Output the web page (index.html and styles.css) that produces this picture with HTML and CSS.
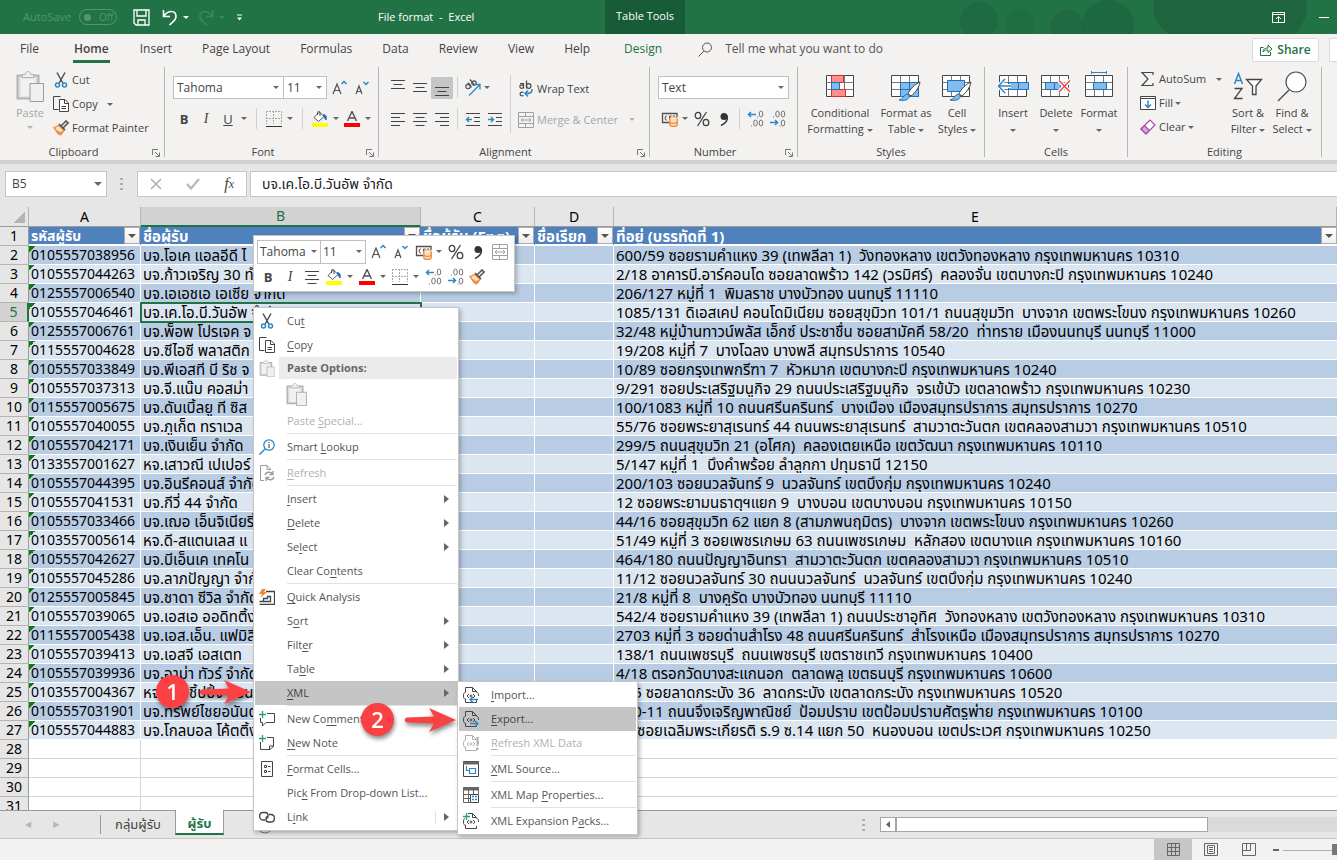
FILE: index.html
```html
<!DOCTYPE html>
<html lang="en">
<head>
<meta charset="utf-8">
<title>File format - Excel</title>
<link rel="stylesheet" href="styles.css">
</head>
<body>
<svg class="defs" aria-hidden="true">
  <symbol id="cut" viewBox="0 0 16 16"><path d="M4 0.5 9.8 11M12 0.5 6.2 11" fill="none" stroke="#505050" stroke-width="1.5"/><circle cx="4.5" cy="13" r="2" fill="none" stroke="#2b88c8" stroke-width="1.5"/><circle cx="11.5" cy="13" r="2" fill="none" stroke="#2b88c8" stroke-width="1.5"/></symbol>
  <symbol id="copy" viewBox="0 0 16 16"><path d="M5.500 13.500H0.500V0.500H7.500" fill="none" stroke="#444"/><path d="M6.500 3.500H12L15.500 7V15.500H6.500Z" fill="#fff" stroke="#444"/><path d="M11.500 3.500V7.500H15.500M8.500 10.500H13M8.500 12.500H13" fill="none" stroke="#444"/></symbol>
  <symbol id="painter" viewBox="0 0 16 16"><path d="M1 7.500 6 5.500 11 10.500 7.500 15 5 13.500 3.500 11Z" fill="#fbe0c8" stroke="#ed8733" stroke-width="1.3"/><path d="M3.500 10.500 6 13 9.500 12" fill="none" stroke="#ed8733" stroke-width="1.5"/><path d="M6 4 12 10M8.500 5.500 13 1 15 3 10.500 7.500" fill="none" stroke="#555" stroke-width="1.6"/></symbol>
  <symbol id="paste" viewBox="0 0 28 31"><path d="M1.500 4.500H22.500V27.500H1.500Z" fill="#dcdcdc" stroke="#b3b3b3" stroke-width="2"/><path d="M4.500 7.500H19.500V25.500H4.500Z" fill="#f1f1f1"/><path d="M6.500 6.500V3.500H9.500C9.500-.5 14.500-.5 14.500 3.500H17.500V6.500Z" fill="#f1f1f1" stroke="#b3b3b3"/><path d="M14 12.500H27.500V30.500H14Z" fill="#f0f0f0" stroke="#9b9b9b"/></symbol>
  <symbol id="bucket" viewBox="0 0 16 16"><path d="M2 6.500 7.500 1 12 5.500 6.500 10.500ZM5.500 4V1.500C5.500 0 8 0 8 1.500V5" fill="#fff" stroke="#505050"/><path d="M11.500 3.500C14.500 4 14.500 6 14 9L12 6Z" fill="#1e6fb5" stroke="#1e6fb5"/><path d="M0 12H16V16H0Z" fill="#ff0"/></symbol>
  <symbol id="fontcolor" viewBox="0 0 16 16"><path d="M3.500 10 8 0.500 12.500 10M5 7H11" fill="none" stroke="#505050" stroke-width="1.400"/><path d="M0 12H16V16H0Z" fill="#f00"/></symbol>
  <symbol id="borders" viewBox="0 0 16 16"><path d="M.5 0V13M15.500 0V13M7.500 0V13M0 .5H16M0 7.500H16" fill="none" stroke="#a8a8a8" stroke-dasharray="2 1"/><path d="M0 15.500H16" stroke="#333"/></symbol>
  <symbol id="growfont" viewBox="0 0 16 16"><path d="M1 14 5 4 9 14M2.500 10.500H7.500" fill="none" stroke="#505050" stroke-width="1.200"/><path d="M9.500 4 12 1.500 14.500 4" fill="none" stroke="#2b88c8" stroke-width="1.500"/></symbol>
  <symbol id="shrinkfont" viewBox="0 0 16 16"><path d="M2 14 5 6 8 14M3 11.500H7" fill="none" stroke="#505050" stroke-width="1.200"/><path d="M9.500 2 12 4.500 14.500 2" fill="none" stroke="#2b88c8" stroke-width="1.500"/></symbol>
  <symbol id="center" viewBox="0 0 16 16"><path d="M1 2.500H15M3.500 6.500H12.500M1 10.500H15M3.500 14.500H12.500" stroke="#444"/></symbol>
  <symbol id="left" viewBox="0 0 16 16"><path d="M1 2.500H15M1 6.500H10M1 10.500H15M1 14.500H10" stroke="#444"/></symbol>
  <symbol id="right" viewBox="0 0 16 16"><path d="M1 2.500H15M6 6.500H15M1 10.500H15M6 14.500H15" stroke="#444"/></symbol>
  <symbol id="top" viewBox="0 0 16 16"><path d="M1 .5H15M3.500 4.500H12.500M1 8.500H15" stroke="#444"/></symbol>
  <symbol id="middle" viewBox="0 0 16 16"><path d="M1 3.500H15M3.500 7.500H12.500M1 11.500H15" stroke="#444"/></symbol>
  <symbol id="bottom" viewBox="0 0 16 16"><path d="M1 7.500H15M3.500 11.500H12.500M1 15.500H15" stroke="#444"/></symbol>
  <symbol id="outdent" viewBox="0 0 16 16"><path d="M1 2.500H15M9 6.500H15M9 10.500H15M1 14.500H15" stroke="#444"/><path d="M7 8.500H1.500M4 6 1.500 8.500 4 11" fill="none" stroke="#2b88c8" stroke-width="1.400"/></symbol>
  <symbol id="indent" viewBox="0 0 16 16"><path d="M1 2.500H15M9 6.500H15M9 10.500H15M1 14.500H15" stroke="#444"/><path d="M1 8.500H6.500M4 6 6.500 8.500 4 11" fill="none" stroke="#2b88c8" stroke-width="1.400"/></symbol>
  <symbol id="orient" viewBox="0 0 18 18"><g fill="none" stroke="#505050" stroke-width="1.200"><circle cx="4" cy="7.500" r="2.200"/><path d="M3.500 4.500C5 3.500 5.500 5 7.500 8.500M6 .5 10.500 6"/><circle cx="10" cy="4" r="2.200"/></g><path d="M5 16.500 15.500 6M11 5.500H16V10.500" fill="none" stroke="#2b88c8" stroke-width="1.300"/></symbol>
  <symbol id="wrap" viewBox="0 0 16 18"><g fill="none" stroke="#444" stroke-width="1.200"><path d="M2 3.500H5.500V8.500M8.500 .5V8.500M5.500 12.500C1 10.500 1 17.500 5.500 15.500"/><ellipse cx="3.700" cy="6.600" rx="1.900" ry="1.800"/><ellipse cx="10.700" cy="6" rx="2.200" ry="2.400"/></g><path d="M14 9C14.500 13 12 13.500 7 13.500M10 10.500 7 13.500 10 16.500" fill="none" stroke="#2b88c8" stroke-width="1.500"/></symbol>
  <symbol id="merge" viewBox="0 0 16 16"><path d="M.5 .5H15.500V15.500H.5ZM.5 4.500H15.500M.5 11.500H15.500M7.500 .5V4.500M7.500 11.500V15.500M3 8H13M5 6 3 8 5 10M11 6 13 8 11 10" fill="none" stroke="#a0a0a0"/></symbol>
  <symbol id="money" viewBox="0 0 17 16"><path d="M8 11.500H1.500V2.500H16V6" fill="none" stroke="#505050" stroke-width="1.300"/><path d="M6 5C3.500 4 3.500 10 6 9M8.500 9V5H10.500M12 5H14" fill="none" stroke="#505050"/><ellipse cx="12.500" cy="7.500" rx="3.700" ry="1.700" fill="#fff" stroke="#ed8733"/><path d="M8.800 7.500V14C8.800 15.900 16.200 15.900 16.200 14V7.500M8.800 11C9.500 12.700 15.500 12.700 16.200 11" fill="#fbe0c8" stroke="#ed8733" stroke-width="1.300"/></symbol>
  <symbol id="percent" viewBox="0 0 16 16"><g fill="none" stroke="#444" stroke-width="1.300"><ellipse cx="4" cy="4.500" rx="2.800" ry="3.200"/><ellipse cx="12" cy="11.500" rx="2.800" ry="3.200"/><path d="M12.500 1 3.500 15"/></g></symbol>
  <symbol id="comma" viewBox="0 0 16 16"><circle cx="8" cy="5.500" r="3.500" fill="#333"/><path d="M11 4.500C12.500 9 9 13 5 14.500" fill="none" stroke="#333" stroke-width="1.600"/></symbol>
  <symbol id="incdec" viewBox="0 0 17 17"><path d="M9 4.500H1.500M4 2 1.500 4.500 4 7" fill="none" stroke="#2b88c8" stroke-width="1.500"/><g fill="none" stroke="#777"><ellipse cx="14" cy="4" rx="1.800" ry="3"/><ellipse cx="8.500" cy="13" rx="1.800" ry="3"/><ellipse cx="14" cy="13" rx="1.800" ry="3"/><path d="M10 7H11M4 16H5"/></g></symbol>
  <symbol id="decdec" viewBox="0 0 17 17"><path d="M1 12.500H8.500M6 10 8.500 12.500 6 15" fill="none" stroke="#2b88c8" stroke-width="1.500"/><g fill="none" stroke="#777"><ellipse cx="14" cy="4" rx="1.800" ry="3"/><ellipse cx="8.500" cy="4" rx="1.800" ry="3"/><ellipse cx="14" cy="13" rx="1.800" ry="3"/><path d="M4 7H5M10.500 16H11.500"/></g></symbol>
  <symbol id="launch" viewBox="0 0 8 8"><path d="M.5 6V.5H6M3 3 7 7M7.500 3.500V7.500H3.500" fill="none" stroke="#777"/></symbol>
  <symbol id="grid" viewBox="0 0 28 24"><path d="M.5 1.500H27.500V22.500H.5Z" fill="#fff" stroke="#444"/><path d="M.5 8.500H27.500M.5 15.500H27.500M9.500 1.500V22.500M18.500 1.500V22.500" stroke="#777"/></symbol>
  <symbol id="xmlfile" viewBox="0 0 16 16"><path d="M2.500 5V.5H9.500L13 4V5M9.500 .5V4.500H13.500M2.500 12V15.500H13.500V13" fill="none" stroke="currentColor"/><path d="M2.500 5.500C.5 5.500 .5 7 .5 9 .5 11.500 1 12 2.500 12M13.500 5.500C15.500 5.500 15.500 7 15.500 9M6 7 4 9 6 11M10 7 12 9 10 11" fill="none" stroke="currentColor"/><circle cx="8" cy="9" r="1" fill="none" stroke="currentColor"/></symbol>
</svg>

<header class="titlebar">
  <div class="quick">
    <label class="autosave">AutoSave <span class="toggle"><input type="checkbox" disabled><i></i>Off</span></label>
    <button class="tb save" aria-label="Save"><svg width="17" height="17"><path d="M1 1H16V16H3L1 14ZM4 1V7H13V1M5 16V11H12V16" fill="none" stroke="#fff" stroke-width="1.300"/></svg></button>
    <button class="tb undo" aria-label="Undo"><svg width="16" height="17"><path d="M1.500 1V7.500H8M2 7C6 1 14 1 14 7.500 14 11 11 13 7.500 16" fill="none" stroke="#fff" stroke-width="1.600"/></svg><i class="caret"></i></button>
    <button class="tb redo" aria-label="Redo"><svg width="16" height="17"><path d="M14.500 1V7.500H8M14 7C10 1 2 1 2 7.500 2 11 5 13 8.500 16" fill="none" stroke="currentColor" stroke-width="1.600"/></svg><i class="caret"></i></button>
    <button class="tb more" aria-label="Customize"><svg width="5" height="7"><path d="M0 1H5" stroke="#fff"/><path d="M0 3.500H5L2.500 6.500Z" fill="#fff"/></svg></button>
  </div>
  <h1>File format&nbsp; -&nbsp; Excel</h1>
  <div class="tools">Table Tools</div>
  <svg class="pattern" width="407" height="34" aria-hidden="true"><g fill="#1e643d"><circle cx="49" cy="21" r="19" opacity=".6"/><circle cx="90" cy="24" r="15" opacity=".35"/><circle cx="137" cy="27" r="17" opacity=".6"/><circle cx="178" cy="26" r="26" opacity=".7"/><path d="M224 0H375C380 12 374 22 366 34H238C226 24 221 12 224 0Z" opacity=".9"/></g></svg>
  <div class="winctl">
    <button aria-label="Ribbon options"><svg width="13" height="11"><path d="M.5 .5H12.500V10.500H.5ZM.5 2.500H12.500M6.500 10V5M4 7 6.500 4.500 9 7" fill="none" stroke="#fff"/></svg></button>
    <button aria-label="Minimize"><svg width="10" height="11"><path d="M0 5.500H10" stroke="#fff"/></svg></button>
  </div>
</header>

<nav class="tabs">
  <button>File</button><button class="on">Home</button><button>Insert</button><button>Page Layout</button><button>Formulas</button><button>Data</button><button>Review</button><button>View</button><button>Help</button><button class="design">Design</button>
  <button class="tell"><svg width="15" height="15"><circle cx="9" cy="5.500" r="4.500" fill="none" stroke="#555"/><path d="M6 9 .5 14.500" stroke="#555"/></svg>Tell me what you want to do</button>
  <button class="share"><svg width="13" height="12"><path d="M3.500 3.500H.5V11.500H10.500V8M3 8C3 5 5 4 8 4V1L12 5 8 8.500V6C6 6 4.500 6 3 8Z" fill="none" stroke="#217346"/></svg>Share</button>
  <button class="comment" aria-label="Comments"></button>
</nav>

<section class="ribbon">
  <div class="group clipboard">
    <div class="body">
      <button class="big dim"><svg width="28" height="31"><use href="#paste"/></svg><span>Paste</span><i class="caret"></i></button>
      <div class="stack">
        <button><svg width="16" height="16"><use href="#cut"/></svg>Cut</button>
        <button><svg width="16" height="16"><use href="#copy"/></svg>Copy <i class="caret"></i></button>
        <button><svg width="16" height="16"><use href="#painter"/></svg>Format Painter</button>
      </div>
    </div>
    <footer class="launcher">Clipboard<svg width="8" height="8"><use href="#launch"/></svg></footer>
  </div>
  <div class="group font">
    <div class="body lines">
      <div class="line">
        <label class="combo fname"><select aria-label="Font"><option>Tahoma</option></select><i class="caret"></i></label><label class="combo fsize"><select aria-label="Font size"><option>11</option></select><i class="caret"></i></label>
        <button class="ic" aria-label="Increase font size"><svg width="16" height="16"><use href="#growfont"/></svg></button>
        <button class="ic" aria-label="Decrease font size"><svg width="16" height="16"><use href="#shrinkfont"/></svg></button>
      </div>
      <div class="line">
        <button class="ic b">B</button><button class="ic it">I</button><button class="ic u">U</button><i class="caret"></i><i class="bar"></i>
        <button class="ic" aria-label="Borders"><svg width="16" height="16"><use href="#borders"/></svg></button><i class="caret"></i><i class="bar"></i>
        <button class="ic" aria-label="Fill colour"><svg width="16" height="16"><use href="#bucket"/></svg></button><i class="caret"></i>
        <button class="ic" aria-label="Font colour"><svg width="16" height="16"><use href="#fontcolor"/></svg></button><i class="caret"></i>
      </div>
    </div>
    <footer class="launcher">Font<svg width="8" height="8"><use href="#launch"/></svg></footer>
  </div>
  <div class="group align">
    <div class="body">
      <div class="lines">
        <div class="line">
          <button class="ic" aria-label="Top align"><svg width="16" height="16"><use href="#top"/></svg></button><button class="ic" aria-label="Middle align"><svg width="16" height="16"><use href="#middle"/></svg></button><button class="ic pressed" aria-label="Bottom align"><svg width="16" height="16"><use href="#bottom"/></svg></button><i class="bar"></i><button class="ic" aria-label="Orientation"><svg width="18" height="18"><use href="#orient"/></svg></button><i class="caret"></i>
        </div>
        <div class="line">
          <button class="ic" aria-label="Align left"><svg width="16" height="16"><use href="#left"/></svg></button><button class="ic" aria-label="Center"><svg width="16" height="16"><use href="#center"/></svg></button><button class="ic" aria-label="Align right"><svg width="16" height="16"><use href="#right"/></svg></button><i class="bar"></i><button class="ic" aria-label="Decrease indent"><svg width="16" height="16"><use href="#outdent"/></svg></button><button class="ic" aria-label="Increase indent"><svg width="16" height="16"><use href="#indent"/></svg></button>
        </div>
      </div>
      <div class="lines wrapcol">
        <div class="line"><button><svg width="16" height="18"><use href="#wrap"/></svg>Wrap Text</button></div>
        <div class="line"><button class="dim"><svg width="16" height="16"><use href="#merge"/></svg>Merge &amp; Center <i class="caret"></i></button></div>
      </div>
    </div>
    <footer class="launcher">Alignment<svg width="8" height="8"><use href="#launch"/></svg></footer>
  </div>
  <div class="group number">
    <div class="body lines">
      <div class="line"><label class="combo"><select aria-label="Number format"><option>Text</option></select><i class="caret"></i></label></div>
      <div class="line">
        <button class="ic" aria-label="Accounting format"><svg width="17" height="16"><use href="#money"/></svg></button><i class="caret"></i><button class="ic" aria-label="Percent"><svg width="16" height="16"><use href="#percent"/></svg></button><button class="ic" aria-label="Comma style"><svg width="16" height="16"><use href="#comma"/></svg></button><i class="bar"></i><button class="ic" aria-label="Increase decimal"><svg width="17" height="17"><use href="#incdec"/></svg></button><button class="ic" aria-label="Decrease decimal"><svg width="17" height="17"><use href="#decdec"/></svg></button>
      </div>
    </div>
    <footer class="launcher">Number<svg width="8" height="8"><use href="#launch"/></svg></footer>
  </div>
  <div class="group styles">
    <div class="body bigs">
      <button class="big"><svg width="28" height="31"><use href="#grid" y="3" width="28" height="24"/><path d="M5.500 4.500H17.500V11.500H5.500ZM5.500 18.500H19.500V25.500H5.500Z" fill="#ff8e8e" stroke="#d92c2c"/><path d="M5.500 11.500H13.500V18.500H5.500Z" fill="#83bbec" stroke="#2072b8"/></svg><span>Conditional<br>Formatting <i class="caret"></i></span></button>
      <button class="big"><svg width="30" height="31"><use href="#grid" y="3" width="28" height="24"/><path d="M9.500 11.500H27.500V25.500H9.500ZM9.500 18.500H27.500M18.500 11.500V25.500" fill="#83bbec" stroke="#2072b8"/><path d="M29 11C24 13 18 19 17 23L20 25C24 22 28 17 29 11Z" fill="#fff" stroke="#444"/><path d="M8 29C12 29 12 24 16 23 20 24 19 31 8 29Z" fill="#83bbec" stroke="#2072b8"/></svg><span>Format as<br>Table <i class="caret"></i></span></button>
      <button class="big"><svg width="30" height="31"><use href="#grid" y="3" width="28" height="24"/><path d="M5.500 9.500H22.500V20.500H5.500Z" fill="#83bbec" stroke="#2072b8"/><path d="M29 11C24 13 18 19 17 23L20 25C24 22 28 17 29 11Z" fill="#fff" stroke="#444"/><path d="M8 29C12 29 12 24 16 23 20 24 19 31 8 29Z" fill="#83bbec" stroke="#2072b8"/></svg><span>Cell<br>Styles <i class="caret"></i></span></button>
    </div>
    <footer>Styles</footer>
  </div>
  <div class="group cells">
    <div class="body bigs">
      <button class="big"><svg width="32" height="31"><use href="#grid" x="2" y="3" width="28" height="24"/><path d="M11.500 11.500H31.500V18.500H11.500ZM21.500 11.500V18.500" fill="#83bbec" stroke="#2072b8"/><path d="M8 8 1.500 15 8 22M2 15H14" fill="none" stroke="#fff" stroke-width="4"/><path d="M8 8 1.500 15 8 22M2 15H14" fill="none" stroke="#2b88c8" stroke-width="1.500"/></svg><span>Insert<br><i class="caret"></i></span></button>
      <button class="big"><svg width="30" height="31"><use href="#grid" y="3" width="28" height="24"/><path d="M4.500 11.500H19.500V18.500H4.500ZM13.500 11.500V18.500" fill="#83bbec" stroke="#2072b8"/><path d="M18 9.500 29 21M29 9.500 18 21" stroke="#fff" stroke-width="4"/><path d="M18 9.500 29 21M29 9.500 18 21" stroke="#e84a4a" stroke-width="1.500"/></svg><span>Delete<br><i class="caret"></i></span></button>
      <button class="big"><svg width="28" height="31"><use href="#grid" y="3" width="28" height="24"/><path d="M8.500 11.500H21.500V18.500H8.500Z" fill="#83bbec" stroke="#2072b8"/><path d="M6.500 0V3M21.500 0V3M6.500 1.500H21.500" stroke="#2b88c8"/></svg><span>Format<br><i class="caret"></i></span></button>
    </div>
    <footer>Cells</footer>
  </div>
  <div class="group editing">
    <div class="body">
      <div class="stack">
        <button><svg width="16" height="16"><path d="M13 4V1.500H2L8 8 2 14.500H13V12" fill="none" stroke="#444" stroke-width="1.200"/></svg>AutoSum <i class="caret"></i></button>
        <button><svg width="16" height="16"><path d="M.5 1.500H15.500V14.500H.5ZM.5 3.500H15.500" fill="#fff" stroke="#444"/><path d="M8 5.500V12M5 9.500 8 12.500 11 9.500" fill="none" stroke="#2b88c8" stroke-width="1.500"/></svg>Fill<i class="caret"></i></button>
        <button><svg width="16" height="16"><path d="M1 10 10 1 15 6 6 15Z" fill="#fff" stroke="#a347ab" stroke-width="1.200"/><path d="M1 10 4.500 6.500 9.500 11.500 6 15Z" fill="#dca0e0" stroke="#a347ab" stroke-width="1.200"/></svg>Clear<i class="caret"></i></button>
      </div>
      <button class="big"><svg width="30" height="31"><path d="M1.500 13 5.500 2.500 9.500 13M3 9.500H8" fill="none" stroke="#2b88c8" stroke-width="1.500"/><path d="M1.500 17.500H9L1.500 27.500H9.500" fill="none" stroke="#444" stroke-width="1.300"/><path d="M13.500 8.500H28.500L23 15V23.500H19.500V15Z" fill="#fff" stroke="#444" stroke-width="1.300"/></svg><span>Sort &amp;<br>Filter <i class="caret"></i></span></button>
      <button class="big"><svg width="30" height="31"><circle cx="19" cy="11" r="10" fill="#fff" stroke="#505050" stroke-width="1.200"/><path d="M12 19 1 30" stroke="#505050" stroke-width="1.400"/></svg><span>Find &amp;<br>Select <i class="caret"></i></span></button>
    </div>
    <footer>Editing</footer>
  </div>
</section>

<section class="formula">
  <label class="namebox"><input aria-label="Name box" value="B5"><i class="caret wide"></i></label>
  <i class="dots"></i>
  <div class="fx">
    <button aria-label="Cancel"><svg width="12" height="12"><path d="M1 1 11 11M11 1 1 11" stroke="#b0b0b0" stroke-width="1.600"/></svg></button>
    <button aria-label="Enter"><svg width="14" height="12"><path d="M1 6 5 10.500 13 1" fill="none" stroke="#b8b8b8" stroke-width="2.200"/></svg></button>
    <button class="fn" aria-label="Insert function"><em>f</em><sub>x</sub></button>
  </div>
  <input class="finput" aria-label="Formula" value="บจ.เค.โอ.บี.วันอัพ จำกัด">
</section>

<main class="sheet">
<table>
<colgroup><col class="w0"><col class="wa"><col class="wb"><col class="wc"><col class="wd"><col></colgroup>
<thead>
<tr class="cols"><th class="corner"></th><th>A</th><th class="sel">B</th><th>C</th><th>D</th><th>E</th></tr>
</thead>
<tbody>
<tr class="head"><th>1</th><td><div>รหัสผู้รับ<button aria-label="Filter"></button></div></td><td><div>ชื่อผู้รับ<button aria-label="Filter"></button></div></td><td><div>ชื่อผู้รับ (Eng)<button aria-label="Filter"></button></div></td><td><div>ชื่อเรียก<button aria-label="Filter"></button></div></td><td><div>ที่อยู่ (บรรทัดที่ 1)<button aria-label="Filter"></button></div></td></tr>
<tr><th>2</th><td>0105557038956</td><td>บจ.โอเค แอลอีดี ไ</td><td></td><td></td><td>600/59 ซอยรามคำแหง 39 (เทพลีลา 1)&nbsp; วังทองหลาง เขตวังทองหลาง กรุงเทพมหานคร 10310</td></tr>
<tr><th>3</th><td>0105557044263</td><td>บจ.ก้าวเจริญ 30 ทำ</td><td></td><td></td><td>2/18 อาคารบี.อาร์คอนโด ซอยลาดพร้าว 142 (วรมิศร์)&nbsp; คลองจั่น เขตบางกะปิ กรุงเทพมหานคร 10240</td></tr>
<tr><th>4</th><td>0125557006540</td><td>บจ.เอเอชเอ เอเซีย จำกัด</td><td></td><td></td><td>206/127 หมู่ที่ 1&nbsp; พิมลราช บางบัวทอง นนทบุรี 11110</td></tr>
<tr class="cur"><th>5</th><td>0105557046461</td><td class="active">บจ.เค.โอ.บี.วันอัพ จำกัด</td><td></td><td></td><td>1085/131 ดิเอสเคป คอนโดมิเนียม ซอยสุขุมิวท 101/1 ถนนสุขุมวิท&nbsp; บางจาก เขตพระโขนง กรุงเทพมหานคร 10260</td></tr>
<tr><th>6</th><td>0125557006761</td><td>บจ.พ็อพ โปรเจค จ</td><td></td><td></td><td>32/48 หมู่บ้านทาวน์พลัส เอ็กซ์ ประชาชื่น ซอยสามัคคี 58/20&nbsp; ท่าทราย เมืองนนทบุรี นนทบุรี 11000</td></tr>
<tr><th>7</th><td>0115557004628</td><td>บจ.ซีไอซี พลาสติก</td><td></td><td></td><td>19/208 หมู่ที่ 7&nbsp; บางโฉลง บางพลี สมุทรปราการ 10540</td></tr>
<tr><th>8</th><td>0105557033849</td><td>บจ.พีเอสที บี ริช จ</td><td></td><td></td><td>10/89 ซอยกรุงเทพกรีฑา 7&nbsp; หัวหมาก เขตบางกะปิ กรุงเทพมหานคร 10240</td></tr>
<tr><th>9</th><td>0105557037313</td><td>บจ.จี.แน๊บ คอสม่า</td><td></td><td></td><td>9/291 ซอยประเสริฐมนูกิจ 29 ถนนประเสริฐมนูกิจ&nbsp; จรเข้บัว เขตลาดพร้าว กรุงเทพมหานคร 10230</td></tr>
<tr><th>10</th><td>0115557005675</td><td>บจ.ดับเบิ้ลยู ที ซิส</td><td></td><td></td><td>100/1083 หมู่ที่ 10 ถนนศรีนครินทร์&nbsp; บางเมือง เมืองสมุทรปราการ สมุทรปราการ 10270</td></tr>
<tr><th>11</th><td>0105557040055</td><td>บจ.ภูเก็ต ทราเวล</td><td></td><td></td><td>55/76 ซอยพระยาสุเรนทร์ 44 ถนนพระยาสุเรนทร์&nbsp; สามวาตะวันตก เขตคลองสามวา กรุงเทพมหานคร 10510</td></tr>
<tr><th>12</th><td>0105557042171</td><td>บจ.เงินเย็น จำกัด</td><td></td><td></td><td>299/5 ถนนสุขุมวิท 21 (อโศก)&nbsp; คลองเตยเหนือ เขตวัฒนา กรุงเทพมหานคร 10110</td></tr>
<tr><th>13</th><td>0133557001627</td><td>หจ.เสาวณี เปเปอร์</td><td></td><td></td><td>5/147 หมู่ที่ 1&nbsp; บึงคำพร้อย ลำลูกกา ปทุมธานี 12150</td></tr>
<tr><th>14</th><td>0105557044395</td><td>บจ.อินรีคอนส์ จำกัด</td><td></td><td></td><td>200/103 ซอยนวลจันทร์ 9&nbsp; นวลจันทร์ เขตบึงกุ่ม กรุงเทพมหานคร 10240</td></tr>
<tr><th>15</th><td>0105557041531</td><td>บจ.กีวี่ 44 จำกัด</td><td></td><td></td><td>12 ซอยพระยามนธาตุฯแยก 9&nbsp; บางบอน เขตบางบอน กรุงเทพมหานคร 10150</td></tr>
<tr><th>16</th><td>0105557033466</td><td>บจ.เฌอ เอ็นจิเนียริ่ง</td><td></td><td></td><td>44/16 ซอยสุขุมวิท 62 แยก 8 (สามภพนฤมิตร)&nbsp; บางจาก เขตพระโขนง กรุงเทพมหานคร 10260</td></tr>
<tr><th>17</th><td>0103557005614</td><td>หจ.ดี-สแตนเลส แ</td><td></td><td></td><td>51/49 หมู่ที่ 3 ซอยเพชรเกษม 63 ถนนเพชรเกษม&nbsp; หลักสอง เขตบางแค กรุงเทพมหานคร 10160</td></tr>
<tr><th>18</th><td>0105557042627</td><td>บจ.บีเอ็นเค เทคโน</td><td></td><td></td><td>464/180 ถนนปัญญาอินทรา&nbsp; สามวาตะวันตก เขตคลองสามวา กรุงเทพมหานคร 10510</td></tr>
<tr><th>19</th><td>0105557045286</td><td>บจ.ลาภปัญญา จำกัด</td><td></td><td></td><td>11/12 ซอยนวลจันทร์ 30 ถนนนวลจันทร์&nbsp; นวลจันทร์ เขตบึงกุ่ม กรุงเทพมหานคร 10240</td></tr>
<tr><th>20</th><td>0125557005845</td><td>บจ.ชาดา ซีวิล จำกัด</td><td></td><td></td><td>21/8 หมู่ที่ 8&nbsp; บางคูรัด บางบัวทอง นนทบุรี 11110</td></tr>
<tr><th>21</th><td>0105557039065</td><td>บจ.เอสเอ ออดิทติ้ง</td><td></td><td></td><td>542/4 ซอยรามคำแหง 39 (เทพลีลา 1) ถนนประชาอุทิศ&nbsp; วังทองหลาง เขตวังทองหลาง กรุงเทพมหานคร 10310</td></tr>
<tr><th>22</th><td>0115557005438</td><td>บจ.เอส.เอ็น. แฟมิลี่</td><td></td><td></td><td>2703 หมู่ที่ 3 ซอยด่านสำโรง 48 ถนนศรีนครินทร์&nbsp; สำโรงเหนือ เมืองสมุทรปราการ สมุทรปราการ 10270</td></tr>
<tr><th>23</th><td>0105557039413</td><td>บจ.เอสจี เอสเตท</td><td></td><td></td><td>138/1 ถนนเพชรบุรี&nbsp; ถนนเพชรบุรี เขตราชเทวี กรุงเทพมหานคร 10400</td></tr>
<tr><th>24</th><td>0105557039936</td><td>บจ.อาม่า ทัวร์ จำกัด</td><td></td><td></td><td>4/18 ตรอกวัดบางสะแกนอก&nbsp; ตลาดพลู เขตธนบุรี กรุงเทพมหานคร 10600</td></tr>
<tr><th>25</th><td>0103557004367</td><td>หจ.เอซี ชิ้ปปิ้ง แอน</td><td></td><td></td><td>235 ซอยลาดกระบัง 36&nbsp; ลาดกระบัง เขตลาดกระบัง กรุงเทพมหานคร 10520</td></tr>
<tr><th>26</th><td>0105557031901</td><td>บจ.ทรัพย์ไชยอนันต์</td><td></td><td></td><td>390-11 ถนนจึงเจริญพาณิชย์&nbsp; ป้อมปราบ เขตป้อมปราบศัตรูพ่าย กรุงเทพมหานคร 10100</td></tr>
<tr><th>27</th><td>0105557044883</td><td>บจ.โกลบอล โค้ตติ้ง</td><td></td><td></td><td>15 ซอยเฉลิมพระเกียรติ ร.9 ซ.14 แยก 50&nbsp; หนองบอน เขตประเวศ กรุงเทพมหานคร 10250</td></tr>
<tr class="blank"><th>28</th><td></td><td></td><td></td><td></td><td></td></tr>
<tr class="blank"><th>29</th><td></td><td></td><td></td><td></td><td></td></tr>
<tr class="blank"><th>30</th><td></td><td></td><td></td><td></td><td></td></tr>
<tr class="blank"><th>31</th><td></td><td></td><td></td><td></td><td></td></tr>
</tbody>
</table>
</main>

<div class="sheettabs">
  <div class="navs"><button aria-label="Previous sheet">◀</button><button aria-label="Next sheet">▶</button></div>
  <button class="tab">กลุ่มผู้รับ</button><button class="tab on">ผู้รับ</button>
  <button class="add" aria-label="New sheet"><svg width="18" height="18"><circle cx="9" cy="9" r="8" fill="none" stroke="#777"/><path d="M9 5V13M5 9H13" stroke="#777"/></svg></button>
  <div class="hscroll"><i class="dots"></i><div class="track"><button aria-label="Scroll left"><svg width="4" height="7"><path d="M4 0V7L0 3.500Z" fill="#666"/></svg></button><div class="thumb"></div></div></div>
</div>

<footer class="status">
  <button class="view on" aria-label="Normal view"><svg width="13" height="13"><path d="M.5 .5H12.500V12.500H.5ZM.5 4.500H12.500M.5 8.500H12.500M4.500 .5V12.500M8.500 .5V12.500" fill="none" stroke="#666"/></svg></button>
  <button class="view" aria-label="Page layout view"><svg width="14" height="13"><path d="M.5 .5H13.500V12.500H.5ZM3.500 2.500H10.500V10.500H3.500ZM5 4.500H9M5 6.500H9M5 8.500H9" fill="none" stroke="#666"/></svg></button>
  <button class="view" aria-label="Page break view"><svg width="14" height="13"><path d="M.5 .5H13.500V12.500H.5ZM.5 7.500H8.500V.5M4.500 .5V7.500" fill="none" stroke="#666"/></svg></button>
  <button class="minus" aria-label="Zoom out"></button>
  <div class="zoom"><input type="range" aria-label="Zoom" min="0" max="100" value="50"></div>
</footer>

<div class="mini">
  <div class="line">
    <label class="combo mname"><select aria-label="Font"><option>Tahoma</option></select><i class="caret"></i></label><label class="combo msize"><select aria-label="Size"><option>11</option></select><i class="caret"></i></label>
    <button class="ic first" aria-label="Increase font size"><svg width="16" height="16"><use href="#growfont"/></svg></button><button class="ic" aria-label="Decrease font size"><svg width="16" height="16"><use href="#shrinkfont"/></svg></button><button class="ic" aria-label="Accounting format"><svg width="17" height="16"><use href="#money"/></svg></button><i class="caret"></i><button class="ic" aria-label="Percent"><svg width="16" height="16"><use href="#percent"/></svg></button><button class="ic" aria-label="Comma style"><svg width="16" height="16"><use href="#comma"/></svg></button><button class="ic" aria-label="Merge"><svg width="16" height="16"><use href="#merge"/></svg></button>
  </div>
  <div class="line">
    <button class="ic b">B</button><button class="ic it">I</button><button class="ic" aria-label="Center"><svg width="16" height="16"><use href="#center"/></svg></button><button class="ic" aria-label="Fill colour"><svg width="16" height="16"><use href="#bucket"/></svg></button><i class="caret"></i><button class="ic" aria-label="Font colour"><svg width="16" height="16"><use href="#fontcolor"/></svg></button><i class="caret"></i><button class="ic" aria-label="Borders"><svg width="16" height="16"><use href="#borders"/></svg></button><i class="caret"></i><button class="ic" aria-label="Increase decimal"><svg width="17" height="17"><use href="#incdec"/></svg></button><button class="ic" aria-label="Decrease decimal"><svg width="17" height="17"><use href="#decdec"/></svg></button><button class="ic" aria-label="Format painter"><svg width="16" height="16"><use href="#painter"/></svg></button>
  </div>
</div>

<div class="menu context" role="menu">
  <button role="menuitem"><svg width="16" height="16"><use href="#cut"/></svg><span>Cu<u>t</u></span></button>
  <button role="menuitem"><svg width="16" height="16"><use href="#copy"/></svg><span><u>C</u>opy</span></button>
  <div class="heading"><svg width="16" height="17" viewBox="0 0 28 31"><use href="#paste"/></svg><span>Paste Options:</span></div>
  <button class="option" role="menuitem" aria-label="Paste"><svg width="21" height="23" viewBox="0 0 28 31"><use href="#paste"/></svg></button>
  <button class="off" role="menuitem"><i></i><span>Paste <u>S</u>pecial...</span></button>
  <hr>
  <button role="menuitem"><svg width="16" height="16"><circle cx="10" cy="6" r="5.200" fill="#fff" stroke="#2b88c8" stroke-width="1.300"/><path d="M6 10 .5 15.500" stroke="#2b88c8" stroke-width="1.500"/><path d="M10 3V4M10 5V9" stroke="#333"/></svg><span>Smart <u>L</u>ookup</span></button>
  <hr>
  <button class="off" role="menuitem"><svg width="16" height="16"><path d="M5 15.500H1.500V.5H8L11.500 4V5M8 .5V4.500H11.500" fill="none" stroke="#9a9a9a"/><path d="M6 10C7 6.500 12 6.500 13.500 9M14 6V9.500H10.500M15 12C14 15.500 9 15.500 7.500 13M7 16V12.500H10.500" fill="none" stroke="#9a9a9a" stroke-width="1.300"/></svg><span><u>R</u>efresh</span></button>
  <hr>
  <button role="menuitem"><i></i><span><u>I</u>nsert</span><b></b></button>
  <button role="menuitem"><i></i><span><u>D</u>elete</span><b></b></button>
  <button role="menuitem"><i></i><span>Se<u>l</u>ect</span><b></b></button>
  <button role="menuitem"><i></i><span>Clear Co<u>n</u>tents</span></button>
  <hr>
  <button role="menuitem"><svg width="16" height="16"><path d="M7 2.500H15.500V15.500H.5M.5 12.500H4.500V9.500H8.500V7.500H11.500V12.500H4.500" fill="none" stroke="#444" stroke-width="1.300"/><path d="M3 0H7L5 3H8L1 9 3 5H0Z" fill="#ed8733"/></svg><span><u>Q</u>uick Analysis</span></button>
  <button role="menuitem"><i></i><span>S<u>o</u>rt</span><b></b></button>
  <button role="menuitem"><i></i><span>Filt<u>e</u>r</span><b></b></button>
  <button role="menuitem"><i></i><span>Ta<u>b</u>le</span><b></b></button>
  <button class="hot" role="menuitem"><i></i><span><u>X</u>ML</span><b></b></button>
  <hr>
  <button role="menuitem"><svg width="16" height="16"><path d="M8 2.500H15.500V11.500H7L3.500 15V11.500H1.500V7" fill="none" stroke="#444"/><path d="M3.500 0V7M0 3.500H7" stroke="#21a366" stroke-width="1.300"/></svg><span>New Co<u>m</u>ment</span></button>
  <button role="menuitem"><svg width="16" height="16"><path d="M8 2.500H14.500V11.500L11 14.500H1.500V7M14.500 11H10.500V14.500" fill="none" stroke="#444"/><path d="M3.500 0V7M0 3.500H7" stroke="#21a366" stroke-width="1.300"/></svg><span><u>N</u>ew Note</span></button>
  <hr>
  <button role="menuitem"><svg width="16" height="16"><path d="M2.500 .5H13.500V15.500H2.500Z" fill="#fff" stroke="#444"/><path d="M5.500 4.500H7.500V6.500H5.500ZM5.500 9.500H7.500V11.500H5.500ZM9 5.500H11.500M9 10.500H11.500" fill="none" stroke="#444"/></svg><span><u>F</u>ormat Cells...</span></button>
  <button role="menuitem"><i></i><span>Pic<u>k</u> From Drop-down List...</span></button>
  <button role="menuitem"><svg width="16" height="16"><path d="M6 11H4C-.5 11-.5 3.500 4 3.500H6C10 3.500 10 9 7 10M10 5.500H12C16.500 5.500 16.500 13 12 13H10C6 13 6 8 9 7" fill="none" stroke="#444" stroke-width="1.300"/></svg><span>L<u>i</u>nk</span><em class="split"></em><b></b></button>
</div>

<div class="menu sub" role="menu">
  <button role="menuitem"><svg width="16" height="16"><use href="#xmlfile"/><path d="M15 12.500H7M10 10 7 12.500 10 15.500" fill="none" stroke="#2b88c8" stroke-width="1.300"/></svg><span><u>I</u>mport...</span></button>
  <button class="hot" role="menuitem"><svg width="16" height="16"><use href="#xmlfile"/><path d="M7 12.500H15M12 10 15 12.500 12 15.500" fill="none" stroke="#2b88c8" stroke-width="1.300"/></svg><span><u>E</u>xport...</span></button>
  <button class="off" role="menuitem"><svg width="16" height="16"><use href="#xmlfile"/><path d="M14.500 2V11M14.500 12.500V15" stroke="#b0b0b0" stroke-width="2"/></svg><span><u>R</u>efresh XML Data</span></button>
  <hr>
  <button role="menuitem"><svg width="16" height="16"><path d="M.5 .5H15.500V15.500H.5Z" fill="#fff" stroke="#444"/><path d="M0 2H16" stroke="#666" stroke-width="3"/><path d="M3.500 5V9.500H6M6.500 7.500H12.500V12.500H6.500Z" fill="none" stroke="#2b88c8" stroke-width="1.200"/></svg><span><u>X</u>ML Source...</span></button>
  <hr>
  <button role="menuitem"><svg width="16" height="16"><path d="M7 15.500H.5V.5H15.500V7M.5 7.500H8M.5 11.500H7M5.500 3V15.500M10.500 3V7" fill="none" stroke="#666"/><path d="M0 2H16" stroke="#666" stroke-width="3"/><path d="M7.500 7.500H15.500V15.500H7.500Z" fill="#fff" stroke="#444"/><path d="M9 9.500H11M9 12.500H11M12 9.500H14M12 12.500H14" stroke="#2b88c8" stroke-width="1.500"/></svg><span>XML Map <u>P</u>roperties...</span></button>
  <hr>
  <button role="menuitem"><svg width="16" height="16"><use href="#xmlfile"/><path d="M3.500 0V7M0 3.500H7" stroke="#fff" stroke-width="3"/><path d="M3.500 0V7M0 3.500H7" stroke="#21a366" stroke-width="1.300"/></svg><span>XML Expansion P<u>a</u>cks...</span></button>
</div>

<div class="callout one"><strong>1</strong><svg width="54" height="28"><path d="M3 11.500 30 10.500 25 2 52 14 25 26 30 17.500 3 16.500C0 16 0 12 3 11.500Z" fill="#fb4143"/></svg></div>
<div class="callout two"><strong>2</strong><svg width="54" height="28"><path d="M3 11.500 30 10.500 25 2 52 14 25 26 30 17.500 3 16.500C0 16 0 12 3 11.500Z" fill="#fb4143"/></svg></div>
</body>
</html>
```
FILE: styles.css
```css
*{box-sizing:border-box}
body{margin:0;height:100vh;overflow:hidden;position:relative;display:flex;flex-direction:column;background:#fff;color:#444;font:11px/16px "Open Sans","Noto Sans Thai",sans-serif}
button,input,select{font:inherit;color:inherit;border:0;background:none;padding:0;margin:0;border-radius:0}
button{display:inline-flex;align-items:center;white-space:nowrap}
svg{display:block;flex:none}
.defs{position:absolute;width:0;height:0}
.caret{flex:none;display:inline-block;width:0;height:0;border:3px solid transparent;border-top-color:#666;border-bottom:0}
.caret.wide{border-width:4px 4px 0}
.bar{width:1px;height:21px;background:#d0d0d0;flex:none}

.titlebar{flex:none;height:34px;background:#217346;color:#fff;display:grid;grid-template-columns:378px 227px 80px 1fr;align-items:center;overflow:hidden}
.titlebar>*{grid-row:1}
.quick{display:flex;align-items:center;padding-left:23px}
.autosave{display:flex;align-items:center;gap:8px;color:#549472;width:110px}
.toggle{display:flex;align-items:center;gap:8px;width:38px;height:16px;border:1px solid #549472;border-radius:8px;padding-left:4px;font-size:10px;line-height:14px}
.toggle input{appearance:none;display:none}
.toggle i{width:7px;height:7px;border-radius:50%;background:#549472}
.tb{gap:5px;width:36px}
.save{width:29px}
.tb .caret{border-top-color:currentColor}
.undo{color:#fff}
.redo{color:#3f8560;width:39px}
h1{margin:0;font:inherit;line-height:32px}
.tools{background:#185c37;height:34px;line-height:32px;text-align:center}
.pattern{grid-column:4;justify-self:end}
.winctl{grid-column:4;justify-self:end;display:flex;gap:34px;padding-right:8px}

.tabs{flex:none;height:32px;background:#f3f2f1;display:flex;align-items:center;gap:30px;padding-left:20px;font-size:12px}
.tabs button{height:24px;line-height:20px;border-bottom:3px solid transparent;margin-top:1px}
.tabs .on{font-weight:600;border-color:#217346;margin-left:4px;padding:0 1px}
.tabs .design{color:#217346;margin-left:4px}
.tabs .tell{gap:12px;margin-left:6px;color:#555}
.tabs .share{margin-left:auto;margin-top:-1px;height:24px;width:67px;background:#fff;border:1px solid #dcdcdc;border-radius:2px;color:#217346;font-weight:600;gap:4px;justify-content:center}
.tabs .comment{margin-left:-20px;margin-top:-1px;width:8px;height:24px;background:#fff;border:1px solid #dcdcdc;border-right:0}

.ribbon{flex:none;height:94px;background:#f3f2f1;display:flex;position:relative}
.group{flex:none;display:flex;flex-direction:column;padding:6px 0 0;position:relative;border-right:1px solid #f3f2f1;border-image:linear-gradient(#f3f2f1 2px,#b5b5b5 2px,#b5b5b5 90px,#f3f2f1 90px) 1}
.group footer{height:16px;display:flex;justify-content:center;align-items:center;position:relative}
.group .launcher{padding-right:17px}
.group footer svg{position:absolute;right:4px;top:5px}
.group .body{flex:1;display:flex;align-items:flex-start}
.clipboard{width:165px}.font{width:214px}.align{width:271px}.number{width:148px}.styles{width:187px}.cells{width:143px}.editing{width:194px}
.big{flex-direction:column;line-height:16px;text-align:center;margin-top:-1px}
.big span{margin-top:3px}
.big span .caret{vertical-align:middle}
.dim{color:#a6a6a6}
.dim .caret{border-top-color:#b5b5b5}
.clipboard .big{width:36px;margin-left:12px}
.clipboard .big .caret{margin-top:5px}
.stack{display:flex;flex-direction:column}
.stack button{height:24px;gap:3px}
.clipboard .stack{margin:-4px 0 0 5px}
.stack .caret{margin-left:6px}
.body.lines,.lines{display:flex;flex-direction:column;gap:6px}
.line{display:flex;align-items:center;height:25px}
.ic{width:22px;height:22px;justify-content:center;flex:none}
.b{font-weight:700;font-size:13px}
.it{font:italic 14px "Liberation Serif",serif}
.u{text-decoration:underline;font-size:13px}
.pressed{background:#c6c6c6}
.combo{display:grid;align-items:center;height:23px;background:#fff;border:1px solid #c0c0c0;margin-right:-1px}
.combo>*,.namebox>*{grid-area:1/1}
.combo .caret,.namebox .caret{justify-self:end;margin-right:4px;pointer-events:none}
.combo select{appearance:none;width:100%;height:21px;padding-left:3px;font-size:12px;line-height:21px}
.font .body{padding-left:8px;padding-top:3px}
.fname{width:111px}.fsize{width:44px;margin-right:2px}
.font .bar{margin:0 6px 0 7px}
.font .line+.line .caret{margin-right:2px}
.font .line+.line .ic+.caret{margin-left:2px}
.align .body{padding:3px 0 0 8px}
.align .bar{margin:0 4px}
.align .lines:first-child{width:123px}
.wrapcol{border-left:1px solid #d0d0d0;padding:1px 0 1px 7px}
.wrapcol button{gap:3px}
.wrapcol .caret{margin-left:8px}
.number .body{padding:3px 8px 0}
.number .combo{width:131px}
.number .ic+.caret{margin:0 3px 0 2px}
.number .bar{margin:0 4px}
.bigs{justify-content:center}
.styles .big{width:58px}
.styles .big:first-child{width:74px}
.styles .big:last-child{width:44px}
.cells .big{width:43px}
.editing .stack{width:86px;margin:-5px 0 0 12px}
.editing .stack .caret{margin-left:-1px}
.editing .stack button:first-child .caret{margin-left:7px}
.editing .big{width:44px}

.formula{flex:none;height:47px;background:#e6e6e6;border-top:4px solid #d6d6d6;border-image:linear-gradient(#cfcfcf,#e6e6e6) 4 0 0 0;display:flex;align-items:flex-start;padding:7px 0 0 5px}
.namebox,.fx,.finput{height:26px;background:#fff;border:1px solid #c6c6c6}
.namebox{display:grid;align-items:center;width:102px;padding-left:6px;font-size:12px}
.namebox input{width:80px}
.dots{width:3px;height:12px;margin:7px 14px 0 13px;background:repeating-linear-gradient(#b0b0b0 0 2px,transparent 2px 5px)}
.fx{width:110px;display:flex;align-items:center;justify-content:space-between;padding:0 12px}
.fn{font:16px "Liberation Serif",serif}
.fn sub{font-size:12px;font-style:italic}
.finput{flex:1;min-width:0;margin-left:3px;padding-left:11px;border-right:0;font-size:14px;color:#222}

.sheet{flex:1;min-height:0;overflow:hidden;background:#fff;font:14px/18px "Noto Sans","Noto Sans Thai",sans-serif;color:#000}
table{width:100%;table-layout:fixed;border-collapse:separate;border-spacing:0}
.w0{width:29px}.wa{width:112px}.wb{width:280px}.wc{width:114px}.wd{width:79px}
tr{height:19px}
th,td{height:19px;padding:0;overflow:hidden;white-space:nowrap;font-weight:400}
th{background:#e6e6e6;border-right:1px solid #9b9b9b;border-bottom:1px solid #b4b4b4}
.cols th{border-bottom:1px solid #9b9b9b;border-right-color:#b4b4b4;height:19px}
.cols .corner{background:linear-gradient(135deg,transparent 50%,#b4b4b4 50%) no-repeat 14px 5px/11px 11px #e6e6e6}
.cols .sel{background:#d2d2d2;color:#217346;border-bottom:2px solid #217346}
td{padding-left:2px;border-right:1px solid #fff;border-bottom:1px solid #fff;background-color:#b8cce4}
td:last-child{border-right:0}
td:nth-child(n+3){font-size:15px}
tbody tr:nth-child(odd) td{background-color:#dce6f1}
tbody tr:nth-child(n+2):not(.blank) td:nth-child(2){background-image:linear-gradient(135deg,#0a7d12 50%,transparent 50%);background-size:6px 6px;background-repeat:no-repeat}
.cur th{background:#d2d2d2;color:#217346;border-right:2px solid #217346}
tbody tr.head:first-child td{background-color:#4f81bd;color:#fff;font-weight:700;border-bottom:2px solid #fff;border-right-color:#4f81bd}
.head div{display:flex;justify-content:space-between;height:17px;line-height:18px}
.head button{flex:none;width:16px;height:17px;border:1px solid #ababab;background:linear-gradient(#fff,#eee)}
.head button::after{content:"";margin:auto;border:4px solid transparent;border-top-color:#555;border-bottom:0}
td.active{outline:2px solid #217346;outline-offset:-1px}
tbody tr.blank:nth-child(n) td{background-color:#fff;border-color:#d4d4d4}

.sheettabs{flex:none;height:29px;background:#e6e6e6;border-top:1px solid #9b9b9b;border-bottom:1px solid #c6c6c6;display:flex;font-size:13px}
.navs{width:101px;margin:4px 0;border-right:1px solid #9b9b9b;display:flex;gap:22px;padding-left:25px;color:#b5b5b5;font:8px "DejaVu Sans",sans-serif}
.tab{width:74px;justify-content:center;height:26px}
.tab.on{width:49px;margin-top:-1px;height:25px;padding-top:3px;background:#fff;border:1px solid #9b9b9b;border-width:0 1px;border-bottom:2px solid #217346;color:#217346;font-weight:700}
.add{align-self:center;margin-left:32px}
.hscroll{margin-left:auto;width:475px;display:flex}
.hscroll .dots{margin:8px 15px 0 0}
.track{flex:1;height:15px;margin-top:6px;background:#dadada;display:flex}
.track button{width:16px;border:1px solid #a6a6a6;justify-content:center;background:#fff}
.thumb{width:312px;background:#fff;border:1px solid #a6a6a6}

.status{flex:none;height:21px;background:#f3f2f1;display:flex;justify-content:flex-end;align-items:center}
.view{width:38px;height:21px;justify-content:center}
.view.on{background:#c8c6c4}
.minus{width:6px;height:2px;background:#666;margin:0 4px 0 5px}
.zoom{width:54px;overflow:hidden;display:flex}
.zoom input{flex:none;width:102px;height:12px;appearance:none;background:linear-gradient(#b0b0b0,#b0b0b0) no-repeat 0 6px/100% 1px}
.zoom input::-webkit-slider-thumb{appearance:none;width:5px;height:11px;background:#777}

.mini,.menu{position:absolute;background:#fff;border:1px solid #c6c6c6;box-shadow:2px 2px 4px rgba(0,0,0,.25)}
.mini{left:253px;top:235px;width:262px;height:57px;padding:3px}
.mini .line{height:25px}
.mini .combo{height:24px}
.mname{width:64px}.msize{width:46px}
.mini .combo select{padding-left:2px}
.mini .combo .caret{margin-right:3px}
.mini .ic.first{margin-left:3px}
.mini .ic+.caret{margin:0 3px 0 2px}
.menu{padding:1px;color:#555;font-size:11px}
.context{left:253px;top:307px;width:206px}
.sub{left:457px;top:681px;width:181px}
.menu button,.heading{display:flex;align-items:center;width:100%;height:24px;padding-left:4px}
.menu svg{color:#444;margin-right:12px}
.menu button>i{width:16px;margin-right:12px}
.menu span{line-height:20px}
.menu u{text-underline-offset:2px}
.menu b{margin:0 8px 0 auto;border:4px solid transparent;border-left:5px solid #666;border-right:0}
.menu .heading{height:22px;font-weight:700;background:linear-gradient(#ebebeb,#ebebeb) no-repeat 24px 0/100% 100%;color:#666}
.menu button.option{height:30px;padding-left:31px}
.menu .off{color:#b0b0b0}
.menu .off svg{color:#b0b0b0}
.menu .hot{background:#c5c5c5;color:#444}
.menu hr{margin:0 0 1px 32px;border:0;height:1px;background:#e1e1e1}
.split{width:1px;height:13px;background:#e1e1e1;margin-left:auto}
.menu .split+b{margin-left:8px}

.callout{position:absolute;display:flex;align-items:center;gap:10px;filter:drop-shadow(1px 3px 2px rgba(0,0,0,.45))}
.callout strong{width:33px;height:33px;border-radius:50%;background:#fb4143;color:#fff;font:600 22px/32px "Open Sans",sans-serif;text-align:center}
.one{left:156px;top:675px}
.two{left:361px;top:703px}
```
